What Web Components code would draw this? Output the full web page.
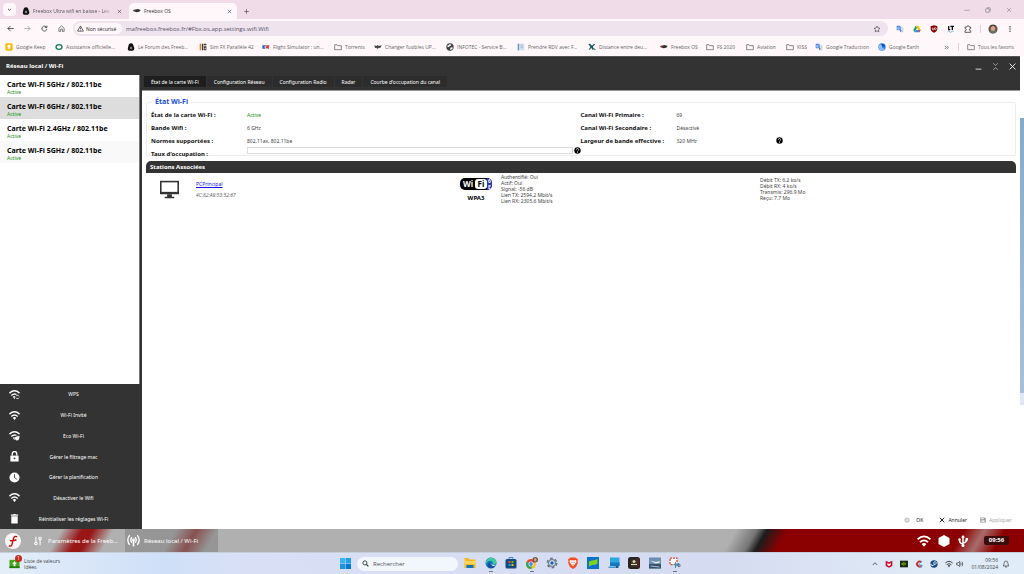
<!DOCTYPE html>
<html lang="fr">
<head>
<meta charset="utf-8">
<title>Freebox OS</title>
<style>
html, body { margin: 0; height: 100%; }
body { font: 5px/6px "Open Sans", "Noto Sans", sans-serif; color: #444; background: #fff; overflow: hidden; }
desktop-screen { min-height: 100vh; }
</style>
</head>
<body>
<desktop-screen></desktop-screen>
<script>
const wifi = (c, extra = '') => `<g fill="none" stroke="${c}" stroke-width="3"><path d="M1 9Q12 -1 23 9M5 14Q12 8 19 14"/></g><path d="M8 17Q12 13.500 16 17L12 22Z" fill="${c}"/>${extra}`;
const folder = '<path d="M2 5h7l2 3h11v12H2z" fill="none" stroke="#555" stroke-width="2"/>';
const line = (d, c = '#444', w = 2) => `<path d="${d}" fill="none" stroke="${c}" stroke-width="${w}"/>`;
const translate = '<path d="M2 2h11l4 14H4q-2 0-2-2z" fill="#4285f4"/><path d="M13 7h7q2 0 2 2v11q0 2-2 2h-8l5-6z" fill="#c3cbd8"/><path d="M11 7H7.500a3 3 0 1 0 2.500 4H7M14 11h6M17 10v1q0 4-3 6M15 13l5 5" stroke="#fff" fill="none" stroke-width="1.500"/><path d="M12 22l5-6h-5z" fill="#2559b5"/>';
const forum = '<path d="M12 1c6 0 7 5 8 9 2 5 3 7 1 10-2 3-4 3-9 3s-8 0-9-3c-1-4 0-6 1-10 1-5 3-9 8-9z" fill="#111"/><path d="M12 10l4 6-4 3-4-3z" fill="#999"/>';
const fboxTab = '<path d="M1 9l13-3 9 3-4 5-8 2-9-3z" fill="#333"/><path d="M1 9l5-1 1 4-5 1z" fill="#a33"/>';
const ICONS = {
  down: line('M5 9l7 7 7-7', '#333', 4), up: line('M3 16l9-9 9 9', '#333', 3), forum, fbox: fboxTab,
  close: line('M4 4l16 16M20 4L4 20', '#444', 3), thin: line('M4 4l16 16M20 4L4 20', '#777', 2), plus: line('M12 1v22M1 12h22', '#444', 3), minus: line('M1 13h22', '#777', 2),
  restore: '<g fill="none" stroke="#777" stroke-width="2.500"><rect x="3" y="7" width="14" height="14" rx="2"/><path d="M7 3h11q3 0 3 3v11"/></g>',
  back: line('M23 12H3M12 3l-9 9 9 9', '#444', 3), fwd: line('M1 12h20M12 3l9 9-9 9', '#aaa', 3),
  reload: line('M19 8A8.500 8.500 0 1 0 20 14M20 2v7h-7', '#444', 3),
  home: line('M3 11l9-8 9 8v11h-6v-8H9v8H3z', '#555', 2.5),
  warn: line('M12 3L2 21h20zM12 9v6M12 17v2', '#333', 2.5),
  star: line('M12 3l3 6 6 .8-4.500 4.400 1 6.300L12 17.500 6.500 20.500l1-6.300L3 9.800 9 9z', '#444', 2),
  translate,
  drive: '<path d="M8 2h8l7 13h-7z" fill="#fbbc04"/><path d="M8 2l4 7-7 13-4-7z" fill="#1ea362"/><path d="M9 15h14l-4 7H5z" fill="#4285f4"/><path d="M16 15h7l-4 7z" fill="#ea4335"/>',
  ublock: '<path d="M12 1l10 3v8q0 7-10 11Q2 19 2 12V4z" fill="#800000"/><path d="M7 8v4q0 3 2.500 3T12 12V8M13 11a3 3 0 1 0 6 0 3 3 0 0 0-6 0" stroke="#fff" fill="none" stroke-width="2"/>',
  lt: '<path d="M5 3v11h5M10 4h11M16 4v11" stroke="#111" stroke-width="4" fill="none"/><path d="M2 20q3-4 6 0t6 0 6 0" stroke="#2a86d8" stroke-width="2" fill="none"/>',
  ext: line('M3 6h6V5a3 3 0 0 1 6 0v1h5v5h-1a3 3 0 0 0 0 6h1v5H3v-5h1a3 3 0 0 0 0-6H3z', '#444', 2.5),
  face: '<circle cx="12" cy="12" r="11" fill="#6b5a4a"/><ellipse cx="12" cy="11" rx="5" ry="7" fill="#d9a58a"/><path d="M2 17q10-2 20 0-3 6-10 6T2 17z" fill="#5d7766"/><path d="M7 7q5-4 10 0l1-4H6z" fill="#4a3528"/>',
  dots: '<g fill="#444"><circle cx="12" cy="3" r="3"/><circle cx="12" cy="12" r="3"/><circle cx="12" cy="21" r="3"/></g>',
  more: line('M3 4l8 8-8 8M13 4l8 8-8 8', '#333', 3),
  keep: '<rect x="1" y="1" width="22" height="22" rx="4" fill="#fbbc04"/><path d="M12 5a5 5 0 0 1 3 9v4H9v-4a5 5 0 0 1 3-9z" fill="#fff"/>',
  assist: '<ellipse cx="12" cy="12" rx="9" ry="7" fill="none" stroke="#128054" stroke-width="4"/>',
  simfx: '<path d="M2 2h5v20H2z" fill="#d8862d"/><path d="M9 2h4v20H9zM15 2h7v5h-7zM15 10h7v12h-7z" fill="#333"/><path d="M17 14h3v5h-3z" fill="#eee"/>',
  flight: '<path d="M1 7h11l-2 4H6v2h4l-1 4H1z" fill="#2c67c4"/><path d="M13 7h10l-3 5 2 5h-5l-2-3-2 3h-2z" fill="#d33c33"/>', folder,
  changer: '<path d="M1 7l6 2 4-3 3 3 9-2-4 8-5-1-3 4-4-4-4 1z" fill="#444"/>',
  globe: '<circle cx="12" cy="12" r="11" fill="#3c4043"/><path d="M4 7q5 1 6-3 4-1 6 1-1 4-5 4-1 4-6 4zM13 14q5-3 8 0-2 6-8 7z" fill="#fff"/>',
  rdv: '<path d="M2 2h5v20H2z" fill="#5aa0d0"/><path d="M8 2h14v20H8z" fill="#d5e1ea"/><path d="M10 6h9M10 10h8M10 14h9" stroke="#91adc2" stroke-width="1.500"/>',
  plane: '<path d="M1 3l5-1 6 6 6-5 4 0-7 8 2 9h-4l-3-6-5 6H2l5-8z" fill="#115c61"/><path d="M16 15l6 6" stroke="#115c61" stroke-width="3"/>',
  earth: '<circle cx="12" cy="12" r="11" fill="#2b7de9"/><path d="M2 7q10-7 10 3 0 9 9 6-4 7-10 7T1 13z" fill="#8ac0ff"/><path d="M9 4q8-3 12 4l-6 4z" fill="#174ea6"/>',
  wmin: line('M2 21h20', '#eee', 3), wmax: line('M4 1l8 7 8-7M4 23l8-7 8 7', '#bbb', 2.5), wclose: line('M2 2l20 20M22 2L2 22', '#fff', 3),
  help: '<circle cx="12" cy="12" r="11" fill="#000"/><path d="M8 9.500a4 4 0 1 1 5.500 3.500q-1.500.700-1.500 2.500M12 17v3" stroke="#fff" stroke-width="2.500" fill="none"/>',
  wifi: wifi('#fff'),
  wps: wifi('#fff', '<circle cx="18.500" cy="17.500" r="6" fill="#333"/><path d="M15 16a4 4 0 0 1 7 0M22 19a4 4 0 0 1-7 0" fill="none" stroke="#fff" stroke-width="2"/>'),
  eco: wifi('#fff', '<circle cx="18" cy="17.500" r="6" fill="#333"/><path d="M13 18q0-5 10-5 0 10-6 10-3 0-4-5z" fill="#fff"/>'),
  lock: '<path d="M3 10h18v13H3z" fill="#fff"/><path d="M7 10V6a5 5 0 0 1 10 0v4" stroke="#fff" stroke-width="3" fill="none"/><circle cx="12" cy="16" r="2" fill="#333"/>',
  clock: '<circle cx="12" cy="12" r="11" fill="#fff"/><path d="M12 5v7l5 4" stroke="#333" stroke-width="2" fill="none"/>',
  trash: '<path d="M4 3h5l1-1h4l1 1h5v3H4zM5 7h14v16H5z" fill="#fff"/>',
  screen: '<path d="M0 1h24v17H0z" fill="#333"/><path d="M2 3h20v12H2z" fill="#fff"/><path d="M9 18h6v3h3v2H6v-2h3z" fill="#333"/>',
  okc: '<circle cx="12" cy="12" r="10.500" fill="#ccc"/><path d="M7 12l4 4 6-8" stroke="#fff" stroke-width="2.500" fill="none"/>',
  annul: line('M3 3l18 18M21 3L3 21', '#222', 4),
  save: '<path d="M1 2h18l4 4v16H1z" fill="#999"/><path d="M5 4h10v5H5zM6 13h12v7H6z" fill="#eee"/>',
  logo: '<circle cx="12" cy="12" r="12" fill="#f8f6f6"/><path d="M17.500 5.500q-3.500-1.500-4.800 3L10.500 17q-1 3.500-4 2.500M8 11.500q4 .5 8.500-1" stroke="#c00" stroke-width="2" fill="none" stroke-linecap="round"/>',
  sliders: '<path d="M7 2v13M17 9v13" stroke="#fff" stroke-width="2.500"/><circle cx="7" cy="18" r="3" fill="none" stroke="#fff" stroke-width="2.500"/><circle cx="17" cy="6" r="3" fill="none" stroke="#fff" stroke-width="2.500"/>',
  antenna: '<g fill="none" stroke="#fff" stroke-width="2.500"><path d="M5 2q-7 9 0 18M9 6q-4 5 0 10M19 2q7 9 0 18M15 6q4 5 0 10"/></g><circle cx="12" cy="11" r="2.500" fill="#fff"/><path d="M12 12v11" stroke="#fff" stroke-width="3"/>',
  hex: '<path d="M12 0l11 6v12l-11 6L1 18V6z" fill="#fff"/>',
  usb: '<g fill="none" stroke="#fff" stroke-width="3"><path d="M12 3v17M12 18q-7-1-7-8M12 16q7-1 7-7"/></g><path d="M8 5l4-5 4 5z" fill="#fff"/><circle cx="12" cy="21" r="3" fill="#fff"/><circle cx="5" cy="9" r="2.500" fill="#fff"/><path d="M17 6h5v5h-5z" fill="#fff"/>',
  start: '<path d="M0 0h11.500v11.500H0z" fill="#35b5f0"/><path d="M12.500 0H24v11.500H12.500z" fill="#229fe6"/><path d="M0 12.500h11.500V24H0z" fill="#1a93e0"/><path d="M12.500 12.500H24V24H12.500z" fill="#0878d0"/>',
  search: '<circle cx="10" cy="10" r="7" fill="none" stroke="#333" stroke-width="3"/><path d="M15 15l7 7" stroke="#333" stroke-width="4"/>',
  files: '<path d="M1 2h8l2 3h12v17H1z" fill="#f5b921"/><path d="M1 8h22v6H1z" fill="#ffd45a"/><path d="M5 16h14v6H5z" fill="#1673b8"/>',
  edge: '<circle cx="12" cy="12" r="11" fill="#1b78c8"/><path d="M2 9Q6 0 14 1.500q9 2 9 10-1 5-8 4 3-7-4-8-6 0-9 6z" fill="#3ecb95"/><path d="M10 10q-2 8 10 9-8 6-14 1-3-7 4-10z" fill="#164f9c"/><path d="M13 12q-1 4 6 4 2 0 3-1-2 3-5 3-5-1-4-6z" fill="#e5f2fb"/>',
  store: '<rect x="1" y="4" width="22" height="19" rx="3" fill="#17497e"/><path d="M8 4V1h8v3" stroke="#3b90cc" stroke-width="2" fill="none"/><path d="M7 8h4v4H7z" fill="#f25022"/><path d="M13 8h4v4h-4z" fill="#7fba00"/><path d="M7 14h4v4H7z" fill="#00a4ef"/><path d="M13 14h4v4h-4z" fill="#ffb900"/>',
  chrome: '<circle cx="10" cy="14" r="10" fill="#fbc116"/><path d="M1 9.500A10 10 0 0 1 19 9.500L10 14z" fill="#e94235"/><path d="M1 9.500A10 10 0 0 0 10 24l4-8z" fill="#30a852"/><circle cx="10" cy="14" r="5" fill="#fff"/><circle cx="10" cy="14" r="3.800" fill="#4285f4"/><circle cx="18.500" cy="5.500" r="5.500" fill="#6b5a4a"/><ellipse cx="18.500" cy="5.500" rx="2.500" ry="3.500" fill="#d9a58a"/>',
  gear: '<circle cx="12" cy="12" r="9" fill="none" stroke="#6b7683" stroke-width="4" stroke-dasharray="5 4.425"/><circle cx="12" cy="12" r="8.500" fill="#7b8794"/><circle cx="12" cy="12" r="5.500" fill="#dbe6f0"/><circle cx="12" cy="12" r="3.500" fill="#1f66ac"/>',
  brave: '<path d="M7 1h10l5 4-1 4 1 2-4 9-6 4-6-4-4-9 1-2-1-4z" fill="#fb4c22"/><path d="M6 6l6 1 6-1 1 4-3 4-4 5-4-5-3-4z" fill="#fff"/><path d="M8 9l3 1-1 3zM16 9l-3 1 1 3zM10 15h4l-2 2z" fill="#fb4c22"/>',
  monitor: '<path d="M0 0h24v24H0z" fill="#0a73c9"/><path d="M4 9l6-2v9l-6 3zM10 7l6-1v9l-6 1zM16 6l5-2v9l-5 3z" fill="#7ed321"/>',
  tablet: '<path d="M4 1h19v17H4z" fill="#2ba7e4"/><path d="M4 11h19v7H4z" fill="#1577bd"/><path d="M1 19h13v3H1z" fill="#3c99cf"/><path d="M15 18h6v4h-6z" fill="#145b91"/>',
  game: '<rect width="24" height="24" rx="5" fill="#2a2422"/><path d="M6 5h12v14H6z" fill="#3c3424"/><circle cx="12" cy="9" r="3" fill="#d9ceb0"/><path d="M6 14h12v2H6z" fill="#e7dab5"/><path d="M20 3v18" stroke="#7a2525" stroke-width="2"/>',
  photo: '<path d="M0 1h24v22H0z" fill="#6e8fb0"/><path d="M0 14h24v9H0z" fill="#36506b"/><path d="M2 7l12 3 8-2-2 4-7 1z" fill="#e8eef4"/><path d="M3 18l18 2" stroke="#a9bfd2" stroke-width="2"/>',
  snip: '<path d="M2 2h14v13H2z" fill="#fff" stroke="#d9482b" stroke-width="2.500" stroke-dasharray="4 2"/><path d="M13 10v12M10 14l11 3M20 12l-6 7" stroke="#2b9bd7" stroke-width="2" fill="none"/><circle cx="20" cy="17" r="2.500" fill="none" stroke="#456" stroke-width="1.500"/>',
  mcafee: '<path d="M2 2l10 5 10-5v16l-10 5-10-5z" fill="#c8102e"/><path d="M7 9l5 3 5-3v6l-5 3-5-3z" fill="#fff"/>',
  nvidia: '<path d="M0 2h24v20H0z" fill="#1c2a12"/><path d="M4 12q6-8 14-1-6 8-14 1z" fill="none" stroke="#76b900" stroke-width="2.500"/><circle cx="11" cy="12" r="2" fill="#76b900"/>',
  cclean: '<path d="M21 6A10 10 0 1 0 21 19l-4-3a5 5 0 1 1 0-8z" fill="#cf2a2a"/><path d="M13 10l8-7M11 14l12 3M12 18l8 4" stroke="#3a8fd0" stroke-width="3"/>',
  steam: '<circle cx="12" cy="12" r="11" fill="#174a86"/><circle cx="15" cy="9" r="4" fill="none" stroke="#fff" stroke-width="2"/><path d="M1 13l8 4 5-5" stroke="#fff" stroke-width="3" fill="none"/>',
  wifid: wifi('#444'),
  sound: '<path d="M2 9h4l5-5v16l-5-5H2z" fill="none" stroke="#333" stroke-width="2"/><path d="M14 8q3 4 0 8M18 5q5 7 0 14" fill="none" stroke="#333" stroke-width="2"/>',
  bell: line('M4 18q2-2 2-8 1-7 6-7t6 7q0 6 2 8zM9 21h6', '#333', 2),
  money: '<path d="M1 4h22v18H1z" fill="#45a81a"/><path d="M1 18h22v4H1z" fill="#257a0a"/><path d="M12 7l5 6h-3v5h-4v-5H7z" fill="#fff"/>'
};

const define = (tag, css, html) => customElements.define(tag, class extends HTMLElement {
  connectedCallback() {
    if (this.shadowRoot) return;
    const root = this.attachShadow({ mode: 'open' });
    const t = document.createElement('template');
    t.innerHTML = `<style>*{box-sizing:border-box}button,input{font:inherit;color:inherit;border:0;background:none;padding:0;margin:0;min-width:0}button{display:flex;align-items:center}${css}</style>` + (typeof html === 'function' ? html(this) : html);
    root.append(t.content.cloneNode(true));
  }
});
const ic = (n, cls = '') => `<ui-icon name="${n}" class="${cls}"></ui-icon>`;

define('ui-icon', ':host{display:block;width:8px;height:8px;flex:none}svg{display:block;width:100%;height:100%}',
  el => `<svg viewBox="0 0 24 24" aria-hidden="true">${ICONS[el.getAttribute('name')]}</svg>`);

define('browser-tab', `
:host{display:flex;align-items:center;gap:3px;height:16px;width:112px;padding:0 7px 0 5px;border-radius:5px 5px 0 0;color:#555}
:host([active]){background:#fff7fa;color:#333;width:108px;padding:0 5px 0 4px}
span{flex:1;overflow:hidden;white-space:nowrap}.x{width:5px;height:5px}
:host(:not([active])) span{-webkit-mask:linear-gradient(90deg,#000 85%,transparent)}`,
  el => `${ic(el.getAttribute('icon'))}<span><slot></slot></span><button aria-label="Fermer">${ic('close', 'x')}</button>`);

define('tab-strip', `
:host{display:flex;align-items:flex-end;height:19px;background:#f0dce8;padding-left:3px}
.menu{align-self:center;width:13px;height:13px;justify-content:center;background:#fff7fa;border-radius:4px;margin-right:1px}
.menu ui-icon{width:5px;height:5px}.new{height:16px;padding-left:7px}.new ui-icon{width:5px;height:5px}
.win{display:flex;gap:15px;margin-left:auto;height:19px;padding-right:12px;align-items:center}.win ui-icon{width:6px;height:6px}`,
  `<button class="menu" aria-label="Onglets">${ic('down')}</button><browser-tab icon="forum">Freebox Ultra wifi en baisse - Les</browser-tab><browser-tab icon="fbox" active>Freebox OS</browser-tab><button class="new" aria-label="Nouvel onglet">${ic('plus')}</button>
<div class="win"><button aria-label="Réduire">${ic('minus')}</button><button aria-label="Restaurer">${ic('restore')}</button><button aria-label="Fermer">${ic('thin')}</button></div>`);

define('address-bar', `
:host{display:flex;align-items:center;height:19px;background:#fff7fa;padding:0 11px 0 7px}
.nav{display:flex;gap:10px;margin-right:8px}.nav ui-icon{width:7px;height:7px}
.omni{flex:1;display:flex;align-items:center;height:15px;border-radius:8px;background:#efe3ee;padding:0 7px 0 2px}
.chip{display:flex;align-items:center;gap:2px;width:47px;height:11px;background:#fff7fa;border-radius:6px;padding-left:2px;margin-right:4px;color:#222}
.chip ui-icon{width:7px;height:7px}.chip span{white-space:nowrap}
input{flex:1;font-size:6px;outline:0;color:#556}
.ext{display:flex;align-items:center;gap:9px;margin-left:8px}.face{width:10px;height:10px}.ext i{width:1px;height:8px;background:#f3c9de;margin:0 -2px 0 -1px}.dots{width:6px}`,
  `<div class="nav"><button aria-label="Retour">${ic('back')}</button><button aria-label="Avancer">${ic('fwd')}</button><button aria-label="Actualiser">${ic('reload')}</button><button aria-label="Accueil">${ic('home')}</button></div>
<div class="omni"><button class="chip">${ic('warn')}<span>Non sécurisé</span></button><input aria-label="Adresse" value="mafreebox.freebox.fr/#Fbx.os.app.settings.wifi.Wifi">${ic('star')}</div>
<div class="ext">${ic('translate')}${ic('drive')}${ic('ublock')}${ic('lt')}${ic('ext')}<i></i>${ic('face', 'face')}${ic('dots', 'dots')}</div>`);

const marks = [['keep', 'Google Keep'], ['assist', 'Assistance officielle...'], ['forum', 'Le Forum des Freeb...'], ['simfx', 'Sim FX Parallèle 42'], ['flight', 'Flight Simulator : un...'], ['folder', 'Torrents'], ['changer', 'Changer fusibles UP...'], ['globe', 'INFOTEC - Service B...'], ['rdv', 'Prendre RDV avec F...'], ['plane', 'Distance entre deu...'], ['fbox', 'Freebox OS'], ['folder', 'FS 2020'], ['folder', 'Aviation'], ['folder', 'KISS'], ['translate', 'Google Traduction'], ['earth', 'Google Earth']];
define('bookmark-bar', `
:host{display:grid;grid-template-columns:50px 72px 72px 63px 72px 40px 72px 71px 71px 72px 46px 40px 40px 29px 63px 1fr auto auto;align-items:center;height:18px;background:#fff7fa;padding:0 10px 0 5px}
a{display:flex;align-items:center;gap:3px;color:#666;text-decoration:none;white-space:nowrap}.more{padding-right:9px}.more ui-icon{width:5px;height:5px}.all{border-left:1px solid #f3c9de;padding-left:8px}`,
  marks.map(([i, t]) => `<a href="#">${ic(i)}<span>${t}</span></a>`).join('') + `<button class="more" aria-label="Autres favoris">${ic('more')}</button><a class="all" href="#">${ic('folder')}<span>Tous les favoris</span></a>`);

define('wifi-card', `
:host{display:block;height:22px;padding:5px 7px 0;color:#179417;font-size:5px;line-height:6px}
:host([selected]){background:#ddd}:host([alt]){background:#f9f9f9}
b{display:block;font-size:7px;line-height:9px;color:#000;white-space:nowrap}`, '<b><slot></slot></b>Active');

define('side-action', `
:host{display:flex;flex:1}button{flex:1;display:grid;grid-template-columns:28px 1fr 23px;justify-items:center;color:#fff}ui-icon{width:11px;height:11px}`,
  el => `<button>${ic(el.getAttribute('icon'))}<span><slot></slot></span></button>`);

define('side-panel', `
:host{display:flex;flex-direction:column;width:142px;flex:none;background:#333}
.list{flex:1;background:#fff;border-right:1px solid #777;margin-right:2px}.acts{display:flex;flex-direction:column;height:145px}`,
  `<div class="list"><wifi-card>Carte Wi-Fi 5GHz / 802.11be</wifi-card><wifi-card selected>Carte Wi-Fi 6GHz / 802.11be</wifi-card><wifi-card>Carte Wi-Fi 2.4GHz / 802.11be</wifi-card><wifi-card alt>Carte Wi-Fi 5GHz / 802.11be</wifi-card></div>
<div class="acts"><side-action icon="wps">WPS</side-action><side-action icon="wifi">Wi-Fi Invité</side-action><side-action icon="eco">Eco Wi-Fi</side-action><side-action icon="lock">Gérer le filtrage mac</side-action><side-action icon="clock">Gérer la planification</side-action><side-action icon="wifi">Désactiver le Wifi</side-action><side-action icon="trash">Réinitialiser les réglages Wi-Fi</side-action></div>`);

define('panel-tabs', `
:host{display:flex;height:16px;background:#333;padding:1px 2px 3px;border-bottom:1px solid #999}
button{padding:0 7px;color:#fff;background:#2c2c2c;border-right:1px solid #333;white-space:nowrap}button[aria-selected=true]{background:#1e1e1e}`,
  `<button role="tab" aria-selected="true">État de la carte Wi-Fi</button><button role="tab">Configuration Réseau</button><button role="tab">Configuration Radio</button><button role="tab">Radar</button><button role="tab">Courbe d'occupation du canal</button>`);

define('wifi-state', `
:host{display:block;padding:5px 4px 0}
fieldset{margin:0;min-width:0;border:1px solid #eee;border-radius:2px;padding:0 5px 0 4px;height:60px}
legend{padding:0 3px;margin-left:1px;font-weight:bold;font-size:7px;line-height:12px;color:#1a4fd8}
.cols{display:grid;grid-template-columns:1fr 1fr}
dl{margin:0;display:grid;grid-template-columns:96px 1fr;grid-auto-rows:13px;align-items:center}
dt{font-weight:bold;font-size:6px;color:#111;white-space:nowrap}dd{margin:0;display:flex;align-items:center;white-space:nowrap}
.on{color:#179417}.w{width:99px}ui-icon{width:7px;height:7px}.rate{align-self:start}
progress{appearance:none;flex:1;height:7px;border:1px solid #ddd;background:#fff;margin-right:1px}progress::-webkit-progress-bar{background:#fff}`,
  `<fieldset><legend>État Wi-Fi</legend><div class="cols">
<dl><dt>État de la carte Wi-Fi :</dt><dd class="on">Active</dd><dt>Bande Wifi :</dt><dd>6 GHz</dd><dt>Normes supportées :</dt><dd>802.11ax, 802.11be</dd><dt>Taux d'occupation :</dt><dd class="rate"><progress value="0" max="100" aria-label="Taux d'occupation"></progress>${ic('help')}</dd></dl>
<dl><dt>Canal Wi-Fi Primaire :</dt><dd>69</dd><dt>Canal Wi-Fi Secondaire :</dt><dd>Désactivé</dd><dt>Largeur de bande effective :</dt><dd><span class="w">320 MHz</span>${ic('help')}</dd></dl></div></fieldset>`);

define('wifi-logo', `
:host{display:flex;width:32px;height:12px;border-radius:5px;background:#000;color:#fff;font-weight:bold;font-size:8px;line-height:10px;padding:1px;overflow:hidden}
span{flex:1;text-align:center}.fi{background:#fff;color:#000;border-radius:3px;flex:none;width:12px}.v{flex:none;width:5px;background:#2b35c4;margin:-1px -1px -1px 0;font-size:5px;line-height:6px}`,
  '<span>Wi</span><span class="fi">Fi</span><span class="v">6<br>E</span>');

define('station-list', `
:host{display:block;padding:5px 4px 0}
h2{margin:0;height:12px;border-radius:5px 5px 0 0;background:#333;color:#fff;font-size:6px;line-height:12px;padding-left:4px;font-weight:bold}
.row{display:grid;grid-template-columns:50px 264px 41px 259px 1fr;line-height:6px;padding-top:1px}
.pc{width:21px;height:19px;margin:6px 0 0 13px}.id{padding-top:7px}.id a{display:block;color:#11e}.id i{display:block;margin-top:5px;color:#666}
.sec{padding-top:4px;width:32px;text-align:center;color:#000}.sec b{display:block;margin-top:5px;font-size:6px}
.t{padding-top:3px}`,
  `<h2>Stations Associées</h2><div class="row">${ic('screen', 'pc')}<div class="id"><a href="#">PCPrincipal</a><i>4C:82:A9:53:52:67</i></div><div class="sec"><wifi-logo></wifi-logo><b>WPA3</b></div>
<div>Authentifié: Oui<br>Actif: Oui<br>Signal: -56 dB<br>Lien TX: 2594.2 Mbit/s<br>Lien RX: 2305.6 Mbit/s</div><div class="t">Débit TX: 6.2 ko/s<br>Débit RX: 4 ko/s<br>Transmis: 296.9 Mo<br>Reçu: 7.7 Mo</div></div>`);

define('form-actions', `
:host{display:flex;justify-content:flex-end;align-items:center;gap:13px;margin-top:auto;height:19px;padding-right:8px;color:#222}
button{gap:3px}ui-icon{width:6px;height:6px}.ok{gap:6px;margin-right:3px}button:disabled{color:#aaa}`,
  `<button class="ok">${ic('okc')}OK</button><button>${ic('annul')}Annuler</button><button disabled>${ic('save')}Appliquer</button>`);

define('box-window', `
:host{display:flex;flex-direction:column;flex:1;background:#fff;font-family:"Noto Sans","Open Sans",sans-serif}
header{display:flex;align-items:center;height:19px;background:#333;border-top:1px solid #555;padding:0 4px 0 6px;margin-right:4px;color:#fff}
h1{margin:0 auto 0 0;font-size:6px;font-weight:bold}header button{margin-left:10px}header ui-icon{width:7px;height:7px}
.body{display:flex;flex:1}main{flex:1;display:flex;flex-direction:column;min-width:0}
.rail{width:4px;flex:none;padding-top:43px}.rail div{height:287px;background:linear-gradient(#84abc9,#a9bfdb 275px,#dfe9f6 275px)}`,
  `<header><h1>Réseau local / Wi-Fi</h1><button aria-label="Réduire">${ic('wmin')}</button><button aria-label="Agrandir">${ic('wmax')}</button><button aria-label="Fermer">${ic('wclose')}</button></header>
<div class="body"><side-panel></side-panel><main><panel-tabs></panel-tabs><wifi-state></wifi-state><station-list></station-list><form-actions></form-actions></main><div class="rail"><div></div></div></div>`);

define('box-taskbar', `
:host{display:flex;align-items:center;height:23px;color:#fff;padding-left:5px;font-size:6px;font-family:"Noto Sans","Open Sans",sans-serif;
background:linear-gradient(120deg,#b0b0b0 0 6%,#981616 8% 9%,#b0b0b0 11% 17%,#963030 19%,#b0b0b0 21% 71%,#777 73%,#1c1c1c 74%,#8b0000 76% 93%,#a86c6c 95%,#8b0000 97%)}
.logo{width:16px;height:16px;margin-right:12px}button{gap:5px;height:23px;white-space:nowrap}
.a{width:92px}.b{width:93px;padding-left:2px;gap:4px;background:#7777}.b ui-icon{width:13px;height:13px}.s{width:10px;height:10px}
.r{display:flex;align-items:center;gap:7px;margin-left:auto;padding-right:15px}.r ui-icon{width:12px;height:12px}.r ui-icon:first-child{width:14px;height:14px}time{background:#3b0c0c;border-radius:2px;width:25px;line-height:9px;text-align:center;font-weight:bold;margin-left:8px}`,
  `<button aria-label="Menu">${ic('logo', 'logo')}</button><button class="a">${ic('sliders', 's')}Paramètres de la Freeb...</button><button class="b">${ic('antenna')}Réseau local / Wi-Fi</button><div class="r">${ic('wifi')}${ic('hex')}${ic('usb')}<time>09:56</time></div>`);

const apps = ['files', 'edge', 'store', 'chrome', 'gear', 'brave', 'monitor', 'tablet', 'game', 'photo', 'snip'];
define('system-taskbar', `
:host{display:grid;grid-template-columns:1fr auto 1fr;align-items:center;height:22px;background:linear-gradient(90deg,#e4eef9,#cfdff8 16%,#d9e0f5 25%,#d5dbf0 70%,#dfeaf6 90%,#e0edf8);border-top:1px solid #c5cedb;color:#444;padding-right:3px}
.widget{display:flex;align-items:center;gap:4px;padding-left:9px}.pic{position:relative}.pic ui-icon{width:11px;height:11px}
.badge{position:absolute;right:-2px;top:-3px;width:7px;height:7px;border-radius:50%;background:#c42b1c;color:#fff;font-size:5px;line-height:7px;text-align:center}
.mid{display:flex;align-items:center}.start ui-icon{width:11px;height:11px}
label{display:flex;align-items:center;gap:4px;width:101px;height:14px;margin:0 6px;border-radius:7px;background:#f2f6fd;padding-left:5px}label ui-icon{width:7px;height:7px}input{width:70px;font-size:6px;color:#555}input::placeholder{color:#555}
.apps{display:flex;justify-content:space-between;width:217px}.apps button{width:12px;height:17px;padding-top:2px;flex-direction:column;justify-content:space-between}.apps ui-icon{width:12px;height:12px}.run::after{content:"";width:4px;height:1px;background:#678}
.tray{display:flex;align-items:center;justify-content:flex-end;gap:7px;padding-right:11px}.tray p{margin:0 -3px 0 0;text-align:right;line-height:7px}.sm{width:6px}.sound{margin-left:-4px}`,
  `<div class="widget"><div class="pic">${ic('money')}<span class="badge">1</span></div><div>Liste de valeurs<br>Idées</div></div>
<div class="mid"><button class="start" aria-label="Démarrer">${ic('start')}</button><label>${ic('search')}<input aria-label="Rechercher" placeholder="Rechercher"></label><div class="apps">${apps.map(a => `<button aria-label="${a}" class="${/edge|chrome|snip/.test(a) ? 'run' : ''}">${ic(a)}</button>`).join('')}</div></div>
<div class="tray">${ic('up', 'sm')}${ic('mcafee')}${ic('nvidia')}${ic('cclean')}${ic('steam')}${ic('wifid')}${ic('sound', 'sound')}<p>09:56<br>01/08/2024</p>${ic('bell')}</div>`);

define('desktop-screen', ':host{display:flex;flex-direction:column}',
  '<tab-strip></tab-strip><address-bar></address-bar><bookmark-bar></bookmark-bar><box-window></box-window><box-taskbar></box-taskbar><system-taskbar></system-taskbar>');
</script>
</body>
</html>
